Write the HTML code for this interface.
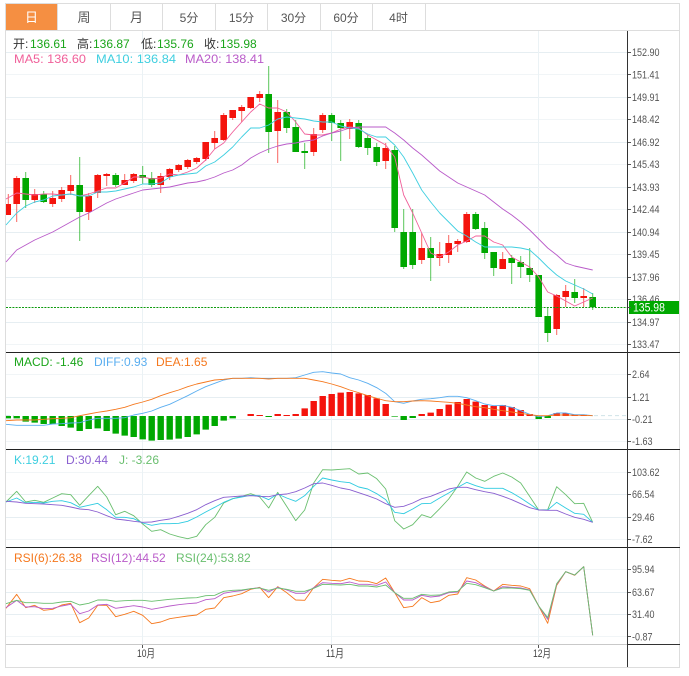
<!DOCTYPE html>
<html><head><meta charset="utf-8"><style>
html,body{margin:0;padding:0;background:#fff;width:689px;height:676px;overflow:hidden}
svg{display:block;font-family:"Liberation Sans","Noto Sans CJK SC",sans-serif}
.l{fill:none;stroke-width:.9;stroke-linejoin:round}
.n{vector-effect:non-scaling-stroke}
</style></head><body>
<svg width="689" height="676" viewBox="0 0 689 676">
<!-- frame -->
<rect x="5.5" y="3.5" width="674" height="664" fill="#fff" stroke="#ddd"/>
<!-- tabs -->
<rect x="6" y="4" width="51" height="26" fill="#f58f42"/>
<path d="M5 30.5H680M57.5 4V30M110.5 4V30M162.5 4V30M215.5 4V30M267.5 4V30M320.5 4V30M372.5 4V30M425.5 4V30" stroke="#ddd" fill="none"/>
<g font-size="12" fill="#555" text-anchor="middle">
<text x="31.5" y="22" fill="#fff" font-size="13">日</text>
<text x="84" y="22" font-size="13">周</text>
<text x="136.5" y="22" font-size="13">月</text>
<text x="189" y="22">5分</text>
<text x="241.5" y="22">15分</text>
<text x="293.5" y="22">30分</text>
<text x="346" y="22">60分</text>
<text x="398.5" y="22">4时</text>
</g>
<!-- grid -->
<path d="M6 52.5H627M6 97.5H627M6 142.5H627M6 187.5H627M6 232.5H627M6 277.5H627M6 322.5H627M6 397.5H627M6 419.5H627M6 494.5H627M6 517.5H627M6 592.5H627M6 614.5H627" stroke="#e6eef2"/>
<path d="M6 74.5H627M6 119.5H627M6 164.5H627M6 209.5H627M6 254.5H627M6 299.5H627M6 344.5H627M6 374.5H627M6 441.5H627M6 472.5H627M6 539.5H627M6 569.5H627M6 636.5H627" stroke="#f1f5f7"/>
<path d="M142.5 31V644M331.5 31V644M538.5 31V644" stroke="#ebf2f5"/>
<!-- wicks -->
<path fill="none" stroke="#f4140d" stroke-opacity=".65" d="M8.3 194V215M16.7 176V222M34.7 189V203M52.7 191V207M61.7 187V202M70.7 175V195M88.7 193V220M97.7 174V198M106.7 173V186M124.7 174V185M133.7 173V183M160.7 173V193M169.7 168V180M178.7 164V172M187.7 159V169M196.7 157V164M205.7 142V161M214.7 131V149M223.7 113V141M232.7 110V120M241.7 105V122M250.7 97V109M259.7 91V102M277.7 100V163M313.7 128V156M322.7 113V133M349.7 119V139M385.7 143V169M421.7 233V264M439.7 242V266M448.7 235V263M457.7 239V252M466.7 212V243M502.7 252V269M556.7 294V335M565.7 285V307M583.7 288V307"/>
<path fill="none" stroke="#00a800" stroke-opacity=".65" d="M25.7 172V208M43.7 191V203M79.7 157V241M115.7 173V187M142.7 166V184M151.7 172V187M268.7 66V153M286.7 109V133M295.7 120V152M304.7 143V169M331.7 113V141M340.7 120V161M358.7 120V148M367.7 135V155M376.7 143V166M394.7 146V232M403.7 209V269M412.7 209V269M430.7 237V281M475.7 212V230M484.7 222V259M493.7 252V276M511.7 255V284M520.7 256V278M529.7 248V282M538.7 275V317M547.7 307V342M574.7 279V303M592.7 293V310"/>
<!-- bodies -->
<path fill="#f4140d" d="M6 204h5v11h-5zM13.4 178h6.6v26h-6.6zM31.4 194h6.6v6h-6.6zM49.4 198h6.6v6h-6.6zM58.4 190h6.6v9h-6.6zM67.4 185h6.6v6h-6.6zM85.4 196h6.6v16h-6.6zM94.4 175h6.6v18h-6.6zM103.4 174h6.6v2h-6.6zM121.4 180h6.6v5h-6.6zM130.4 174h6.6v7h-6.6zM157.4 176h6.6v9h-6.6zM166.4 169h6.6v8h-6.6zM175.4 165h6.6v5h-6.6zM184.4 160h6.6v7h-6.6zM193.4 158h6.6v4h-6.6zM202.4 142h6.6v17h-6.6zM211.4 138h6.6v5h-6.6zM220.4 115h6.6v25h-6.6zM229.4 110h6.6v8h-6.6zM238.4 107h6.6v4h-6.6zM247.4 97h6.6v11h-6.6zM256.4 94h6.6v4h-6.6zM274.4 112h6.6v19h-6.6zM310.4 134h6.6v18h-6.6zM319.4 115h6.6v15h-6.6zM346.4 122h6.6v7h-6.6zM382.4 148h6.6v13h-6.6zM418.4 248h6.6v12h-6.6zM436.4 254h6.6v4h-6.6zM445.4 243h6.6v12h-6.6zM454.4 241h6.6v3h-6.6zM463.4 214h6.6v28h-6.6zM499.4 259h6.6v10h-6.6zM553.4 295h6.6v34h-6.6zM562.4 291h6.6v6h-6.6zM580.4 296h6.6v2h-6.6z"/>
<path fill="#00a800" d="M22.4 178h6.6v22h-6.6zM40.4 194h6.6v8h-6.6zM76.4 185h6.6v27h-6.6zM112.4 175h6.6v10h-6.6zM139.4 175h6.6v3h-6.6zM148.4 178h6.6v7h-6.6zM265.4 94h6.6v38h-6.6zM283.4 112h6.6v16h-6.6zM292.4 127h6.6v25h-6.6zM301.4 151h6.6v2h-6.6zM328.4 115h6.6v8h-6.6zM337.4 123h6.6v5h-6.6zM355.4 123h6.6v24h-6.6zM364.4 138h6.6v10h-6.6zM373.4 147h6.6v15h-6.6zM391.4 150h6.6v78h-6.6zM400.4 232h6.6v35h-6.6zM409.4 232h6.6v33h-6.6zM427.4 248h6.6v10h-6.6zM472.4 214h6.6v15h-6.6zM481.4 228h6.6v25h-6.6zM490.4 252h6.6v16h-6.6zM508.4 258h6.6v5h-6.6zM517.4 262h6.6v5h-6.6zM526.4 268h6.6v7h-6.6zM535.4 275h6.6v42h-6.6zM544.4 316h6.6v17h-6.6zM571.4 292h6.6v6h-6.6zM589.4 297h6.6v10h-6.6z"/>
<!-- MA lines -->
<g transform="translate(7.7 0)">
<polyline class="l" stroke="#f0609a" points="-1.7,199 9,193 18,194 27,195 36,194 45,194 54,195 63,194 72,196 81,194 90,191 99,188 108,188 117,183 126,177 135,177 144,179 153,178 162,174 171,175 180,172 189,168 198,160 207,149 216,143 225,132 234,122 243,112 252,104 261,108 270,108 279,112 288,122 297,134 306,135 315,135 324,133 333,129 342,127 351,128 360,135 369,140 378,145 387,157 396,195 405,213 414,233 423,253 432,257 441,252 450,245 459,241 468,236 477,236 486,242 495,245 504,257 513,262 522,267 531,277 540,292 549,296 558,301 567,306 576,302 585,298"/>
<polyline class="l" stroke="#3fcfe0" points="-1.7,225 9,213 18,206 27,202 36,200 45,196 54,195 63,194 72,196 81,196 90,192 99,192 108,191 117,189 126,187 135,184 144,184 153,183 162,177 171,175 180,174 189,173 198,166 207,162 216,155 225,147 234,137 243,128 252,128 261,125 270,119 279,117 288,118 297,119 306,121 315,122 324,122 333,126 342,128 351,129 360,134 369,137 378,137 387,145 396,157 405,173 414,190 423,202 432,213 441,222 450,231 459,236 468,242 477,247 486,247 495,247 504,247 513,248 522,250 531,258 540,267 549,275 558,281 567,285 576,289 585,294"/>
<polyline class="l" stroke="#b95bc9" points="-1.7,262 9,250 18,245 27,240 36,236 45,232 54,227 63,222 72,217 81,213 90,208 99,203 108,199 117,196 126,193 135,190 144,189 153,188 162,187 171,185 180,183 189,182 198,180 207,177 216,173 225,170 234,165 243,158 252,153 261,149 270,146 279,144 288,143 297,141 306,140 315,136 324,133 333,131 342,128 351,127 360,127 369,127 378,127 387,133 396,140 405,148 414,155 423,163 432,171 441,177 450,183 459,187 468,191 477,195 486,202 495,209 504,215 513,222 522,230 531,239 540,248 549,255 558,263 567,266 576,268 585,270"/>
</g>
<!-- last price dotted -->
<path d="M6 307.5H627" stroke="#0d9a0d" stroke-dasharray="2 1.2" fill="none"/>
<!-- MACD -->
<g transform="translate(0 350) scale(1 .33333)">
<path d="M6 197H14M594 197H627" stroke="#cfe3e8" stroke-dasharray="4 3" class="n" fill="none"/>
<path fill="#00a800" d="M6 198h5V205H6zM13.5 198h6.4V205h-6.4zM22.5 198h6.4V215h-6.4zM31.5 198h6.4V218h-6.4zM40.5 198h6.4V222h-6.4zM49.5 198h6.4V222h-6.4zM58.5 198h6.4V228h-6.4zM67.5 198h6.4V233h-6.4zM76.5 198h6.4V243h-6.4zM85.5 198h6.4V237h-6.4zM94.5 198h6.4V235h-6.4zM103.5 198h6.4V243h-6.4zM112.5 198h6.4V251h-6.4zM121.5 198h6.4V257h-6.4zM130.5 198h6.4V261h-6.4zM139.5 198h6.4V268h-6.4zM148.5 198h6.4V272h-6.4zM157.5 198h6.4V270h-6.4zM166.5 198h6.4V269h-6.4zM175.5 198h6.4V266h-6.4zM184.5 198h6.4V261h-6.4zM193.5 198h6.4V253h-6.4zM202.5 198h6.4V239h-6.4zM211.5 198h6.4V228h-6.4zM220.5 198h6.4V212h-6.4zM229.5 198h6.4V205h-6.4zM265.5 198h6.4V201h-6.4zM391.5 198h6.4V200h-6.4zM400.5 198h6.4V210h-6.4zM409.5 198h6.4V204h-6.4zM535.5 198h6.4V207h-6.4zM544.5 198h6.4V204h-6.4z"/>
<path fill="#f4140d" d="M247.5 192h6.4V198h-6.4zM256.5 195h6.4V198h-6.4zM274.5 192h6.4V198h-6.4zM283.5 195h6.4V198h-6.4zM292.5 192h6.4V198h-6.4zM301.5 175h6.4V198h-6.4zM310.5 153h6.4V198h-6.4zM319.5 138h6.4V198h-6.4zM328.5 132h6.4V198h-6.4zM337.5 128h6.4V198h-6.4zM346.5 126h6.4V198h-6.4zM355.5 130h6.4V198h-6.4zM364.5 135h6.4V198h-6.4zM373.5 145h6.4V198h-6.4zM382.5 162h6.4V198h-6.4zM418.5 192h6.4V198h-6.4zM427.5 188h6.4V198h-6.4zM436.5 177h6.4V198h-6.4zM445.5 164h6.4V198h-6.4zM454.5 156h6.4V198h-6.4zM463.5 147h6.4V198h-6.4zM472.5 155h6.4V198h-6.4zM481.5 165h6.4V198h-6.4zM490.5 168h6.4V198h-6.4zM499.5 165h6.4V198h-6.4zM508.5 171h6.4V198h-6.4zM517.5 180h6.4V198h-6.4zM526.5 192h6.4V198h-6.4zM553.5 189h6.4V198h-6.4zM562.5 190h6.4V198h-6.4zM571.5 194h6.4V198h-6.4zM580.5 194h6.4V198h-6.4z"/>
<g transform="translate(7.7 0)">
<polyline class="l n" stroke="#5aaef0" points="-1.7,223 9,226 18,226 27,226 36,226 45,222 54,221 63,219 72,218 81,210 90,205 99,205 108,205 117,203 126,195 135,190 144,183 153,172 162,163 171,150 180,137 189,123 198,110 207,100 216,90 225,85 234,85 243,83 252,85 261,85 270,85 279,85 288,83 297,75 306,67 315,65 324,69 333,72 342,83 351,90 360,100 369,113 378,130 387,155 396,160 405,153 414,148 423,146 432,143 441,139 450,139 459,143 468,152 477,162 486,167 495,166 504,172 513,182 522,193 531,200 540,197 549,189 558,189 567,194 576,194 585,197"/>
<polyline class="l n" stroke="#f5781e" points="-1.7,212 9,210 18,210 27,210 36,208 45,206 54,205 63,203 72,197 81,192 90,187 99,183 108,178 117,172 126,163 135,156 144,148 153,137 162,128 171,120 180,110 189,102 198,96 207,90 216,88 225,85 234,85 243,85 252,85 261,87 270,85 279,85 288,85 297,85 306,90 315,95 324,102 333,110 342,120 351,128 360,137 369,145 378,152 387,155 396,155 405,153 414,152 423,153 432,155 441,157 450,160 459,165 468,170 477,173 486,178 495,182 504,186 513,190 522,194 531,197 540,197 549,195 558,195 567,196 576,196 585,197"/>
</g>
</g>
<!-- KDJ -->
<g transform="translate(7.7 448) scale(1 .33333)">
<polyline class="l n" stroke="#6abf6f" points="-1.7,162 9,130 18,162 27,157 36,163 45,150 54,137 63,140 72,172 81,143 90,115 99,147 108,200 117,190 126,203 135,228 144,250 153,245 162,258 171,266 180,272 189,265 198,230 207,208 216,165 225,152 234,145 243,137 252,147 261,180 270,133 279,175 288,218 297,186 306,105 315,65 324,66 333,64 342,62 351,78 360,75 369,92 378,123 387,218 396,243 405,230 414,200 423,209 432,182 441,153 450,115 459,72 468,90 477,100 486,85 495,75 504,87 513,105 522,145 531,186 540,185 549,116 558,140 567,167 576,166 585,223"/>
<polyline class="l n" stroke="#2fcbe0" points="-1.7,162 9,150 18,165 27,163 36,165 45,160 54,158 63,164 72,178 81,172 90,166 99,185 108,208 117,208 126,212 135,225 144,232 153,227 162,227 171,226 180,220 189,207 198,192 207,178 216,163 225,152 234,147 243,142 252,143 261,155 270,138 279,150 288,160 297,143 306,115 315,90 324,96 333,101 342,104 351,117 360,123 369,137 378,155 387,193 396,197 405,183 414,167 423,166 432,150 441,135 450,118 459,103 468,113 477,121 486,121 495,121 504,134 513,150 522,168 531,186 540,186 549,163 558,180 567,196 576,199 585,223"/>
<polyline class="l n" stroke="#8a5fd0" points="-1.7,160 9,162 18,166 27,167 36,168 45,170 54,172 63,177 72,183 81,185 90,192 99,203 108,213 117,216 126,220 135,223 144,222 153,217 162,213 171,205 180,196 189,185 198,170 207,158 216,148 225,146 234,144 243,143 252,145 261,146 270,140 279,138 288,131 297,120 306,107 315,105 324,112 333,120 342,125 351,134 360,143 369,153 378,167 387,178 396,175 405,165 414,152 423,145 432,134 441,123 450,118 459,118 468,125 477,131 486,136 495,145 504,155 513,167 522,179 531,186 540,187 549,187 558,198 567,208 576,214 585,223"/>
</g>
<!-- RSI -->
<g transform="translate(7.7 546) scale(1 .33333)">
<polyline class="l n" stroke="#f5781e" points="-1.7,187 9,145 18,185 27,178 36,193 45,190 54,177 63,172 72,230 81,216 90,178 99,178 108,212 117,205 126,196 135,208 144,233 153,228 162,218 171,214 180,210 189,207 198,190 207,186 216,155 225,150 234,143 243,130 252,124 261,155 270,122 279,140 288,162 297,163 306,125 315,100 324,103 333,105 342,97 351,105 360,106 369,113 378,96 387,140 396,185 405,181 414,155 423,170 432,165 441,148 450,144 459,95 468,102 477,120 486,135 495,115 504,118 513,120 522,128 531,180 540,232 549,118 558,77 567,88 576,62 585,268"/>
<polyline class="l n" stroke="#b95bc9" points="-1.7,185 9,163 18,183 27,182 36,188 45,187 54,180 63,175 72,203 81,195 90,177 99,175 108,187 117,183 126,179 135,183 144,190 153,185 162,180 171,176 180,173 189,171 198,161 207,158 216,142 225,137 234,134 243,128 252,125 261,138 270,124 279,132 288,142 297,142 306,125 315,110 324,112 333,113 342,108 351,115 360,115 369,118 378,108 387,140 396,162 405,162 414,148 423,153 432,150 441,140 450,138 459,105 468,110 477,122 486,135 495,122 504,124 513,126 522,132 531,180 540,220 549,115 558,77 567,87 576,62 585,268"/>
<polyline class="l n" stroke="#6abf6f" points="-1.7,173 9,163 18,170 27,170 36,172 45,172 54,168 63,166 72,177 81,172 90,162 99,162 108,166 117,164 126,163 135,163 144,166 153,163 162,160 171,158 180,156 189,155 198,149 207,148 216,136 225,133 234,132 243,128 252,126 261,133 270,126 279,130 288,136 297,136 306,127 315,115 324,116 333,117 342,115 351,120 360,120 369,123 378,117 387,140 396,157 405,157 414,145 423,148 432,147 441,138 450,136 459,112 468,116 477,125 486,135 495,126 504,126 513,128 522,133 531,180 540,215 549,113 558,77 567,87 576,62 585,268"/>
</g>
<!-- separators / axes -->
<rect x="6" y="352" width="674" height="1" fill="#222"/>
<rect x="6" y="449" width="674" height="1" fill="#222"/>
<rect x="6" y="547" width="674" height="1" fill="#222"/>
<rect x="6" y="644" width="621" height="1" fill="#c9c9c9"/>
<rect x="627" y="644" width="53" height="1" fill="#333"/>
<rect x="627" y="31" width="1" height="636" fill="#333"/>
<path d="M628 52.5h3M628 74.5h3M628 97.5h3M628 119.5h3M628 142.5h3M628 164.5h3M628 187.5h3M628 209.5h3M628 232.5h3M628 254.5h3M628 277.5h3M628 299.5h3M628 322.5h3M628 344.5h3M628 374.5h3M628 397.5h3M628 419.5h3M628 441.5h3M628 472.5h3M628 494.5h3M628 517.5h3M628 539.5h3M628 569.5h3M628 592.5h3M628 614.5h3M628 636.5h3M142.5 645v3M331.5 645v3M538.5 645v3" stroke="#555" fill="none"/>
<!-- y labels -->
<g transform="translate(632 0) scale(.82 1)" font-size="11" fill="#555">
<text y="56">152.90</text><text y="78.5">151.41</text><text y="101">149.91</text><text y="123">148.42</text><text y="146">146.92</text><text y="168">145.43</text><text y="191">143.93</text><text y="213">142.44</text><text y="236">140.94</text><text y="258">139.45</text><text y="281">137.96</text><text y="303">136.46</text><text y="326">134.97</text><text y="348">133.47</text>
<text y="378">2.64</text><text y="401">1.21</text><text y="423">-0.21</text><text y="445">-1.63</text>
<text y="476">103.62</text><text y="498">66.54</text><text y="521">29.46</text><text y="543">-7.62</text>
<text y="573">95.94</text><text y="596">63.67</text><text y="618">31.40</text><text y="640.5">-0.87</text>
</g>
<rect x="629" y="301" width="50" height="13" fill="#00a800"/>
<rect x="628" y="307" width="3" height="1" fill="#555"/>
<g transform="translate(633 0) scale(.87 1)"><text y="311.5" font-size="12" fill="#fff">135.98</text></g>
<!-- x labels -->
<g fill="#444" font-size="11">
<text x="137" y="657" textLength="18" lengthAdjust="spacingAndGlyphs">10月</text><text x="326" y="657" textLength="18" lengthAdjust="spacingAndGlyphs">11月</text><text x="533" y="657" textLength="18" lengthAdjust="spacingAndGlyphs">12月</text>
</g>
<!-- legends -->
<g font-size="12">
<text x="13" y="48" fill="#333">开:</text><text x="30" y="48" fill="#1aa51a">136.61</text>
<text x="77" y="48" fill="#333">高:</text><text x="93" y="48" fill="#1aa51a">136.87</text>
<text x="141" y="48" fill="#333">低:</text><text x="157" y="48" fill="#1aa51a">135.76</text>
<text x="204" y="48" fill="#333">收:</text><text x="220" y="48" fill="#1aa51a">135.98</text>
<text x="14" y="63" fill="#f0609a" textLength="72" lengthAdjust="spacingAndGlyphs">MA5: 136.60</text>
<text x="96" y="63" fill="#3fcfe0" textLength="80" lengthAdjust="spacingAndGlyphs">MA10: 136.84</text>
<text x="185" y="63" fill="#b95bc9" textLength="79" lengthAdjust="spacingAndGlyphs">MA20: 138.41</text>
<text x="14" y="366" fill="#1aa51a">MACD: -1.46</text>
<text x="94" y="366" fill="#5aaef0">DIFF:0.93</text>
<text x="156" y="366" fill="#f5781e">DEA:1.65</text>
<text x="14" y="464" fill="#3fcfe0">K:19.21</text>
<text x="66" y="464" fill="#8a5fd0">D:30.44</text>
<text x="119" y="464" fill="#6abf6f">J: -3.26</text>
<text x="14" y="562" fill="#f5781e">RSI(6):26.38</text>
<text x="91" y="562" fill="#b95bc9">RSI(12):44.52</text>
<text x="176" y="562" fill="#6abf6f">RSI(24):53.82</text>
</g>
</svg>
</body></html>
